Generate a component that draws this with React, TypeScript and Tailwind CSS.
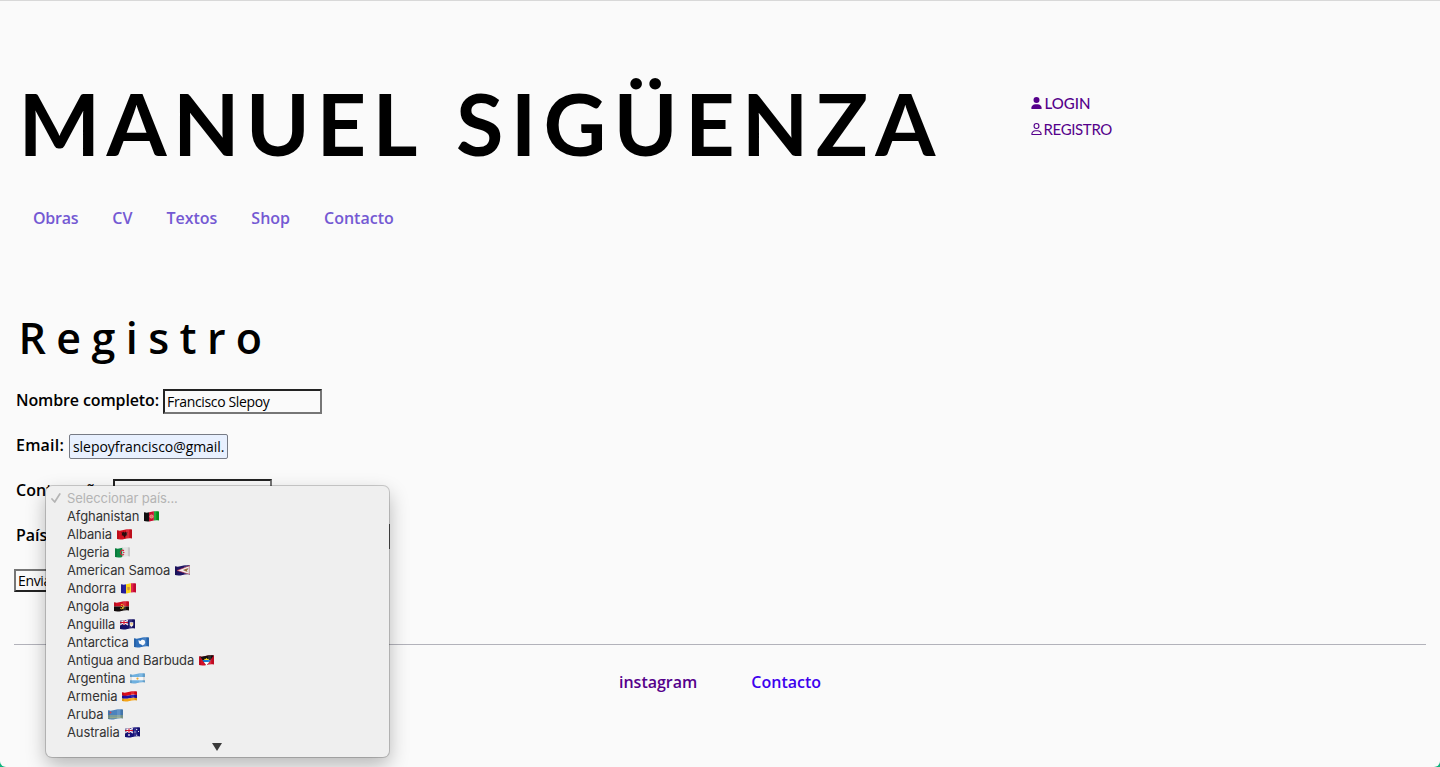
import type { ReactNode } from "react";
import { FaRegUser, FaUser } from "react-icons/fa6";

function Flag({ id, children }: { id: string; children: ReactNode }) {
  return (
    <svg className="h-[11px] w-[15px] shrink-0" viewBox="0 0 15 11">
      <defs>
        <clipPath id={`flag-${id}`}>
          <path d="M0 1.2C3 2.1 5 1.4 7.500 .8S12.500 .2 15 .5V9.400C12.500 8.900 10 9.200 7.500 9.900S2.500 10.700 0 10.100Z" />
        </clipPath>
      </defs>
      <g clipPath={`url(#flag-${id})`}>
        {children}
        <path d="M0 0H2V11H0ZM13 0h2v11h-2z" fill="#000" opacity=".1" />
        <path d="M9 0h3v11H9z" fill="#fff" opacity=".12" />
      </g>
    </svg>
  );
}

function UnionJack() {
  return (
    <g>
      <path d="M0 1l8 5M8 1L0 6" stroke="#f3e6ee" strokeWidth="1.300" />
      <path d="M4 0v6M0 3.500h8" stroke="#fff" strokeWidth="2" />
      <path d="M4 0v6M0 3.500h8" stroke="#d3122e" strokeWidth="1.100" />
    </g>
  );
}

const countries: { name: string; flag: ReactNode }[] = [
  {
    name: "Afghanistan",
    flag: (
      <>
        <path d="M0 0h5v11H0z" fill="#111" />
        <path d="M5 0h5v11H5z" fill="#c8102e" />
        <path d="M10 0h5v11h-5z" fill="#079b22" />
        <circle cx="7.500" cy="5.500" r="1.700" fill="#e2705f" stroke="#f4c9bd" strokeWidth=".5" />
      </>
    ),
  },
  {
    name: "Albania",
    flag: (
      <>
        <path d="M0 0h15v11H0z" fill="#d2101f" />
        <path d="M7.500 3.800L6.500 2.600 6 3.500 4.600 3 5 5 4.700 6.300 6.400 6.700 7.500 9l1.100-2.300 1.700-.4L10 5l.4-2L9 3.500l-.5-.9z" fill="#2b0a0c" />
      </>
    ),
  },
  {
    name: "Algeria",
    flag: (
      <>
        <path d="M0 0h7.500v11H0z" fill="#0b8a43" />
        <path d="M7.500 0H15v11H7.500z" fill="#dedede" />
        <path d="M9 3.700a2.300 2.300 0 1 0 0 3.700" fill="none" stroke="#d8213b" strokeWidth="1.100" />
        <circle cx="8.800" cy="5.500" r=".8" fill="#d8213b" />
      </>
    ),
  },
  {
    name: "American Samoa",
    flag: (
      <>
        <path d="M0 0h15v11H0z" fill="#1d1463" />
        <path d="M15 .5L2 5.500 15 9.500z" fill="#f2eeee" stroke="#b9203b" strokeWidth=".6" />
        <path d="M8 5l3-1.200 2.500-.6L12 5.600l.5 1.400-2-.8z" fill="#8d5a22" />
      </>
    ),
  },
  {
    name: "Andorra",
    flag: (
      <>
        <path d="M0 0h5v11H0z" fill="#251fa0" />
        <path d="M5 0h5v11H5z" fill="#fbd51c" />
        <path d="M10 0h5v11h-5z" fill="#d50b36" />
        <path d="M6.300 4h2.400v2.600l-1.200 1-1.200-1z" fill="#cf8b3b" />
      </>
    ),
  },
  {
    name: "Angola",
    flag: (
      <>
        <path d="M0 0h15v5.500H0z" fill="#d20f24" />
        <path d="M0 5.500h15V11H0z" fill="#120b0b" />
        <path d="M7 3.500a2.200 2.200 0 1 1-.8 3.600M6.800 4.800l2.500 2.500" fill="none" stroke="#eec021" strokeWidth=".9" />
      </>
    ),
  },
  {
    name: "Anguilla",
    flag: (
      <>
        <path d="M0 0h15v11H0z" fill="#18126a" />
        <UnionJack />
        <path d="M9.800 3.300h3.500v3L11.500 8 9.800 6.300z" fill="#f7f4e5" />
        <path d="M10.500 4.300h2v1.300h-2z" fill="#e7a83c" />
      </>
    ),
  },
  {
    name: "Antarctica",
    flag: (
      <>
        <path d="M0 0h15v11H0z" fill="#2d6fbb" />
        <path d="M4.500 3l1.800 1L8 2.500l2.500.8.8 2-.8 2L8.500 8.500l-1.300-1-1.900-.7-.6-1.700z" fill="#f6f9fc" />
      </>
    ),
  },
  {
    name: "Antigua and Barbuda",
    flag: (
      <>
        <path d="M0 0h15v11H0z" fill="#d20f27" />
        <path d="M0 0h15L7.500 10.500z" fill="#111" />
        <path d="M3.300 5h8.400L10.200 7H4.800z" fill="#1681d2" />
        <path d="M4.800 7h5.400l-2.700 3.500z" fill="#fff" />
        <path d="M5 5l.8-1.200.9.2.8-1.200.8 1.200 1-.2.7 1.200z" fill="#fbd823" />
      </>
    ),
  },
  {
    name: "Argentina",
    flag: (
      <>
        <path d="M0 0h15v11H0z" fill="#6fb0df" />
        <path d="M0 4h15v3.200H0z" fill="#f5f5f5" />
        <circle cx="7.500" cy="5.600" r="1.100" fill="#eaaa35" />
      </>
    ),
  },
  {
    name: "Armenia",
    flag: (
      <>
        <path d="M0 0h15v4.200Q11 3 7.500 4.300T0 4.500z" fill="#dc0b19" />
        <path d="M0 4.500Q4 5.300 7.500 4.300T15 4v3.200Q11 6.300 7.500 7.300T0 7.500z" fill="#1d0fa5" />
        <path d="M0 7.500Q4 8.300 7.500 7.300T15 7v4H0z" fill="#f5a416" />
      </>
    ),
  },
  {
    name: "Aruba",
    flag: (
      <>
        <path d="M0 0h15v11H0z" fill="#4c83bd" />
        <path d="M0 7h15M0 8.800h15" stroke="#d9cf59" strokeWidth=".7" />
        <path d="M2.500 2l.5 1.100 1.100.5L3 4.100l-.5 1.100L2 4.100.9 3.600 2 3.100z" fill="#c54960" />
      </>
    ),
  },
  {
    name: "Australia",
    flag: (
      <>
        <path d="M0 0h15v11H0z" fill="#16127a" />
        <UnionJack />
        <path d="M3.200 7.200h1.600v1.600H3.200zM11.200 2h1v1h-1zM11.200 7.800h1v1h-1zM9.500 4.500h1v1h-1zM13 4h1v1h-1z" fill="#fff" />
      </>
    ),
  },
];

function CountryMenu() {
  return (
    <div className="absolute left-[46px] top-[485px] flex h-[271px] w-[343px] flex-col rounded-[6px] bg-[#efefef] pt-[3px] font-[Inter,sans-serif] text-[13px] font-normal leading-[18px] tracking-[-0.1px] text-[#333] shadow-[0_0_0_1px_rgba(0,0,0,0.18),0_8px_20px_rgba(0,0,0,0.28)]">
      <div className="flex h-[18px] items-center text-[#b4b4b4]">
        <svg className="ml-[5px] mr-[6px] h-[10px] w-[10px]" viewBox="0 0 10 10" fill="none" stroke="currentColor" strokeWidth="1.700" strokeLinecap="round" strokeLinejoin="round">
          <path d="M1 6l2.700 3L8.800 1" />
        </svg>
        Seleccionar país...
      </div>
      {countries.map(({ name, flag }) => (
        <div key={name} className="flex h-[18px] items-center gap-[5px] pl-[21px]">
          {name}
          <Flag id={name.replaceAll(" ", "-")}>{flag}</Flag>
        </div>
      ))}
      <svg className="ml-[166px] mt-[2px] h-[8px] w-[10px]" viewBox="0 0 10 8">
        <path d="M0 0h10L5 8z" fill="#3a3a3a" />
      </svg>
    </div>
  );
}

export default function App() {
  return (
    <div className="h-[767px] overflow-hidden bg-[#10b47e]">
      <div className="relative flex h-full flex-col overflow-hidden rounded-b-[6px] border-t border-[#d8d8d8] bg-[#fafafa] font-['Open_Sans',sans-serif] text-[16px] font-[550] text-black">
        <header className="flex pl-[18.500px] pt-[77px]">
          <h1 className="w-[1012.500px] whitespace-nowrap font-[Lato,sans-serif] text-[86.500px] font-bold leading-[90px] tracking-[6.300px]">
            MANUEL <span className="ml-[7.600px] tracking-[7.200px]">SIGÜENZA</span>
          </h1>
          <div className="flex flex-col pt-[12px] font-[Lato,sans-serif] text-[15px] leading-[26px] text-[#55008b]">
            <a className="flex items-center gap-[2.500px] font-medium">
              <FaUser className="h-[12px] w-[11px]" />
              LOGIN
            </a>
            <a className="flex items-center gap-[1.500px] font-normal tracking-[-0.350px]">
              <FaRegUser className="h-[12px] w-[11px]" />
              REGISTRO
            </a>
          </div>
        </header>

        <nav className="mt-[38px] flex gap-[34px] pl-[33px] leading-[24px] text-[#7459d3]">
          <a className="tracking-[-0.250px]">Obras</a>
          <a>CV</a>
          <a>Textos</a>
          <a>Shop</a>
          <a>Contacto</a>
        </nav>

        <h2 className="mt-[78px] pl-[18.500px] text-[43px] font-semibold leading-[60px] tracking-[10.400px]">Registro</h2>

        <form className="mt-[21px] flex flex-col gap-[20px] pl-[16px]">
          <div className="flex gap-[4px]">
            <label className="w-[143px] whitespace-nowrap leading-[23px] tracking-[-0.120px]">Nombre completo:</label>
            <input readOnly defaultValue="Francisco Slepoy" className="h-[25px] w-[159px] border-2 border-b-[#767676] border-l-[#222] border-r-[#767676] border-t-[#222] px-[2px] text-[14px] font-medium tracking-[-0.350px]" />
          </div>
          <div className="flex gap-[4px]">
            <label className="w-[49px] leading-[23px] tracking-[0.200px]">Email:</label>
            <input readOnly defaultValue="slepoyfrancisco@gmail." className="h-[25px] w-[159px] rounded-[2px] border border-[#777b85] bg-[#e8f0fe] pl-[3px] text-[14px] font-medium tracking-[-0.050px]" />
          </div>
          <div className="flex gap-[4px]">
            <label className="w-[93px] leading-[23px]">Contraseña:</label>
            <input readOnly className="h-[25px] w-[159px] border-2 border-b-[#767676] border-l-[#222] border-r-[#767676] border-t-[#222]" />
          </div>
          <div className="flex gap-[4px]">
            <label className="w-[38px] leading-[23px]">País:</label>
            <div className="h-[25px] w-[332px] border border-[#555]" />
          </div>
          <button type="button" className="-ml-[2px] flex h-[23px] w-[52px] items-center border-2 border-b-[#222] border-l-[#767676] border-r-[#222] border-t-[#767676] pl-[2px] text-[14px] font-medium tracking-[-0.350px]">
            Enviar
          </button>
        </form>

        <footer className="mx-[14px] mt-[52px] flex justify-center gap-[54px] border-t border-[#b2b2ba] pt-[25px] leading-[24px]">
          <a className="text-[#55008b]">instagram</a>
          <a className="text-[#3d00ee]">Contacto</a>
        </footer>

        <CountryMenu />
      </div>
    </div>
  );
}
